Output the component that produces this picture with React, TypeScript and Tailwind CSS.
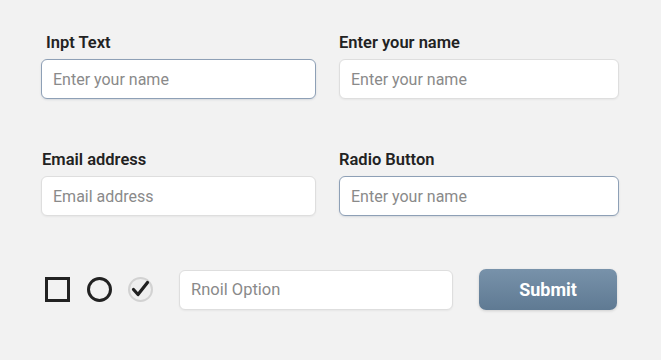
type FieldProps = {
  label: string;
  placeholder: string;
  focused?: boolean;
  labelClassName?: string;
};

function Field({ label, placeholder, focused, labelClassName }: FieldProps) {
  return (
    <div className="flex flex-col">
      <label className={`h-5 text-[16.5px] leading-5 font-semibold text-[#222] ${labelClassName ?? ""}`}>
        {label}
      </label>
      <input
        type="text"
        placeholder={placeholder}
        className={`mt-[6px] h-10 rounded-[6px] bg-white px-[11px] text-[16px] text-[#333] placeholder:text-[#8a8a8a] outline-none ${
          focused
            ? "border-[1.5px] border-[#8ea0b6] shadow-[0_1px_2px_rgba(60,80,110,0.15)]"
            : "border border-[#dedede] shadow-[0_1px_2px_rgba(0,0,0,0.05)]"
        }`}
      />
    </div>
  );
}

export default function App() {
  return (
    <div
      className="h-[360px] w-[661px] bg-[#f2f2f2] pl-[41px] pt-[33px]"
      style={{ fontFamily: "Roboto, 'Liberation Sans', sans-serif" }}
    >
      <div className="grid grid-cols-[275px_280px] gap-x-[23px] gap-y-[51px]">
        <Field label="Inpt Text" placeholder="Enter your name" focused labelClassName="pl-[5px]" />
        <Field label="Enter your name" placeholder="Enter your name" />
        <Field label="Email address" placeholder="Email address" labelClassName="pl-[1px]" />
        <Field label="Radio Button" placeholder="Enter your name" focused />
      </div>

      <div className="mt-[53px] flex items-center">
        <div className="ml-[4px] h-[25px] w-[25px] border-[3px] border-[#222]" />
        <div className="ml-[17px] h-[25px] w-[25px] rounded-full border-[3px] border-[#222]" />
        <svg className="ml-[15px]" width="27" height="27" viewBox="0 0 27 27">
          <circle cx="13.5" cy="13.5" r="11.5" fill="#eeeeee" stroke="#d2d2d2" strokeWidth="2" />
          <path d="M6.5 13.5 L11 18.5 L20.5 6.5" fill="none" stroke="#1f1f1f" strokeWidth="3.2" strokeLinecap="round" strokeLinejoin="round" />
        </svg>
        <input
          type="text"
          placeholder="Rnoil Option"
          className="ml-[25px] h-10 w-[274px] rounded-[6px] border border-[#dedede] bg-white px-[11px] text-[16.5px] placeholder:text-[#8a8a8a] shadow-[0_1px_2px_rgba(0,0,0,0.05)] outline-none"
        />
        <button
          type="button"
          className="ml-[26px] h-[41px] w-[138px] rounded-[7px] bg-gradient-to-b from-[#7892aa] to-[#5f7a93] text-[18px] font-bold text-white shadow-[0_1px_3px_rgba(0,0,0,0.15)]"
        >
          Submit
        </button>
      </div>
    </div>
  );
}
